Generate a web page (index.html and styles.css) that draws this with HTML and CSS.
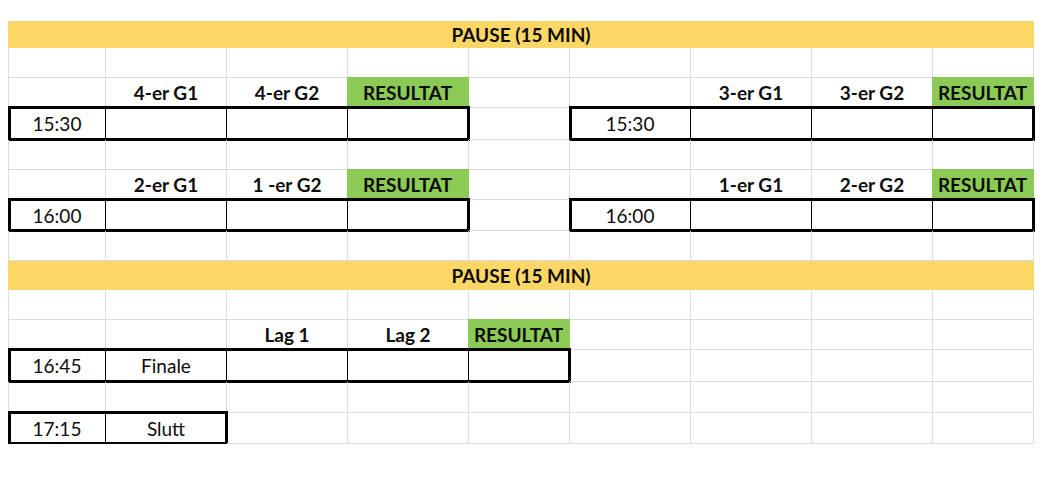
FILE: index.html
```html
<!DOCTYPE html>
<html lang="no">
<head>
<meta charset="utf-8">
<title>Kampoppsett</title>
<link rel="stylesheet" href="styles.css">
</head>
<body>
<div class="sheet">
  <div class="band">PAUSE (15 MIN)</div>

  <div class="row">
    <div class="cell"></div><div class="cell"></div><div class="cell"></div><div class="cell"></div><div class="cell"></div><div class="cell"></div><div class="cell"></div><div class="cell"></div><div class="cell"></div>
  </div>

  <div class="row">
    <div class="cell"></div>
    <div class="cell hd">4-er G1</div>
    <div class="cell hd">4-er G2</div>
    <div class="cell hd res">RESULTAT</div>
    <div class="cell"></div>
    <div class="cell"></div>
    <div class="cell hd">3-er G1</div>
    <div class="cell hd">3-er G2</div>
    <div class="cell hd res">RESULTAT</div>
  </div>

  <div class="row">
    <div class="box box-left">
      <div class="bc">15:30</div><div class="bc"></div><div class="bc"></div><div class="bc"></div>
    </div>
    <div class="cell"></div>
    <div class="box box-right">
      <div class="bc">15:30</div><div class="bc"></div><div class="bc"></div><div class="bc"></div>
    </div>
  </div>

  <div class="row">
    <div class="cell"></div><div class="cell"></div><div class="cell"></div><div class="cell"></div><div class="cell"></div><div class="cell"></div><div class="cell"></div><div class="cell"></div><div class="cell"></div>
  </div>

  <div class="row">
    <div class="cell"></div>
    <div class="cell hd">2-er G1</div>
    <div class="cell hd">1 -er G2</div>
    <div class="cell hd res">RESULTAT</div>
    <div class="cell"></div>
    <div class="cell"></div>
    <div class="cell hd">1-er G1</div>
    <div class="cell hd">2-er G2</div>
    <div class="cell hd res">RESULTAT</div>
  </div>

  <div class="row">
    <div class="box box-left">
      <div class="bc">16:00</div><div class="bc"></div><div class="bc"></div><div class="bc"></div>
    </div>
    <div class="cell"></div>
    <div class="box box-right">
      <div class="bc">16:00</div><div class="bc"></div><div class="bc"></div><div class="bc"></div>
    </div>
  </div>

  <div class="row">
    <div class="cell"></div><div class="cell"></div><div class="cell"></div><div class="cell"></div><div class="cell"></div><div class="cell"></div><div class="cell"></div><div class="cell"></div><div class="cell"></div>
  </div>

  <div class="band">PAUSE (15 MIN)</div>

  <div class="row">
    <div class="cell"></div><div class="cell"></div><div class="cell"></div><div class="cell"></div><div class="cell"></div><div class="cell"></div><div class="cell"></div><div class="cell"></div><div class="cell"></div>
  </div>

  <div class="row">
    <div class="cell"></div>
    <div class="cell"></div>
    <div class="cell hd">Lag 1</div>
    <div class="cell hd">Lag 2</div>
    <div class="cell hd res">RESULTAT</div>
    <div class="cell"></div><div class="cell"></div><div class="cell"></div><div class="cell"></div>
  </div>

  <div class="row">
    <div class="box box-final">
      <div class="bc">16:45</div><div class="bc">Finale</div><div class="bc"></div><div class="bc"></div><div class="bc"></div>
    </div>
    <div class="cell"></div><div class="cell"></div><div class="cell"></div><div class="cell"></div>
  </div>

  <div class="row">
    <div class="cell"></div><div class="cell"></div><div class="cell"></div><div class="cell"></div><div class="cell"></div><div class="cell"></div><div class="cell"></div><div class="cell"></div><div class="cell"></div>
  </div>

  <div class="row">
    <div class="box box-end">
      <div class="bc">17:15</div><div class="bc">Slutt</div>
    </div>
    <div class="cell"></div><div class="cell"></div><div class="cell"></div><div class="cell"></div><div class="cell"></div><div class="cell"></div><div class="cell"></div>
  </div>
</div>
</body>
</html>
```

FILE: styles.css
```css
html, body {
  margin: 0;
  padding: 0;
  background: #ffffff;
}

body {
  font-family: Lato, "Open Sans", "Liberation Sans", sans-serif;
  font-size: 19px;
  color: #0d0d0d;
}

.sheet {
  margin: 21px 0 0 8px;
  width: 1026px;
  display: grid;
  grid-template-rows: 27px 30px 30px 32px 30px 30px 31px 30px 29px 30px 30px 32px 31px 31px;
}

.band {
  background: #fdd766;
  font-weight: 700;
  display: flex;
  align-items: center;
  justify-content: center;
}

.row {
  display: grid;
  grid-template-columns: 97px 121px 121px 121px 101px 121px 121px 121px 101px;
  border-left: 1px solid #dcdcdc;
}

.cell {
  box-sizing: border-box;
  border-right: 1px solid #dcdcdc;
  border-bottom: 1px solid #dcdcdc;
  display: flex;
  align-items: center;
  justify-content: center;
  white-space: nowrap;
}

.hd {
  font-weight: 700;
}

.res {
  background: #8bcb55;
  border-color: #8bcb55;
  margin: -1px 0 0 -1px;
}

.box {
  display: grid;
  margin-top: -1px;
  outline: 3px solid #000;
  outline-offset: -2px;
}

.box-left {
  grid-column: 1 / 5;
  grid-template-columns: 97px 121px 121px 121px;
  grid-template-columns: subgrid;
}

.box-right {
  grid-column: 6 / 10;
  grid-template-columns: 121px 121px 121px 101px;
  grid-template-columns: subgrid;
}

.box-final {
  grid-column: 1 / 6;
  grid-template-columns: 97px 121px 121px 121px 101px;
  grid-template-columns: subgrid;
}

.box-end {
  grid-column: 1 / 3;
  grid-template-columns: 97px 121px;
  grid-template-columns: subgrid;
}

.bc {
  box-sizing: border-box;
  border-right: 1px solid #000;
  display: flex;
  align-items: center;
  justify-content: center;
  white-space: nowrap;
}
```
